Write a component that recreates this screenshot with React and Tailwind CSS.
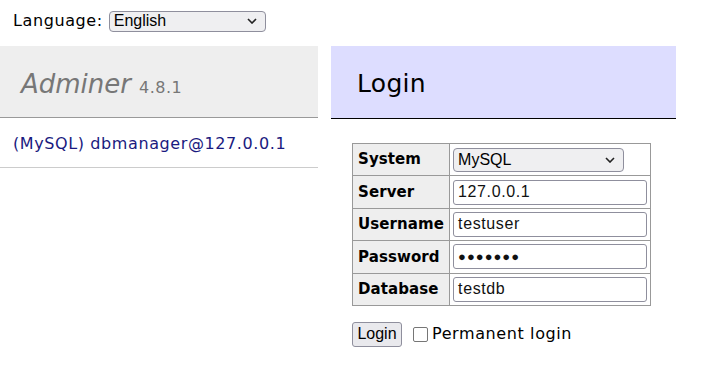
import React from 'react';

const Chevron = () => (
    <svg width="10" height="6" viewBox="0 0 10 6" className="shrink-0">
        <path d="M1 1l4 4 4-4" fill="none" stroke="#222" strokeWidth="1.6" />
    </svg>
);

const Row = ({ label, children }) => (
    <tr>
        <th className="border border-[#999] bg-[#eee] text-left font-bold text-[15px] tracking-[0.1px] px-[5px] h-[32.4px] w-[97px]">{label}</th>
        <td className="border border-[#999] px-[3px]">{children}</td>
    </tr>
);

const Field = ({ value }) => (
    <div className="h-[25px] w-[194px] border border-[#8f8f9d] rounded-[3px] bg-white flex items-center px-[4px] font-['Liberation_Sans',sans-serif] text-[16px] text-[#111]">
        {value}
    </div>
);

export default function App() {
    return (
        <div className="w-[710px] h-[388px] bg-white text-black font-['DejaVu_Sans',sans-serif] text-[16px] tracking-[0.6px] overflow-hidden">
            {/* Language */}
            <div className="flex items-center gap-[6px] pl-[13px] pt-[11px] h-[31px]">
                <span>Language:</span>
                <div className="h-[21px] w-[157px] border border-[#8f8f9d] rounded-[4px] bg-[#efeff1] flex items-center justify-between pl-[4px] pr-[8px] font-['Liberation_Sans',sans-serif] text-[16px] tracking-normal">
                    <span>English</span>
                    <Chevron />
                </div>
            </div>

            <div className="flex mt-[15px]">
                {/* Menu */}
                <div className="w-[318px]">
                    <h1 className="h-[72px] bg-[#eee] border-b border-[#999] flex items-center pl-[21px] pt-[6px] text-[#777] tracking-normal">
                        <span className="italic text-[26px]">Adminer</span>
                        <span className="text-[16px] ml-[8px] mt-[6px] tracking-[0.5px]">4.8.1</span>
                    </h1>
                    <div className="h-[50px] border-b border-[#ccc] flex items-center pl-[13px] pt-[3px] text-[#1a1a80]">
                        (MySQL) dbmanager@127.0.0.1
                    </div>
                </div>

                {/* Content */}
                <div className="ml-[13px] w-[345px]">
                    <h2 className="h-[73px] bg-[#ddf] border-b border-black flex items-center pl-[26px] pt-[3px] text-[25px] tracking-[0.3px]">
                        Login
                    </h2>
                    <div className="pl-[21px] pt-[24px]">
                        <table className="border-collapse">
                            <tbody>
                                <Row label="System">
                                    <div className="h-[24px] w-[171px] border border-[#8f8f9d] rounded-[4px] bg-[#efeff1] flex items-center justify-between pl-[4px] pr-[8px] font-['Liberation_Sans',sans-serif] text-[16px] tracking-normal">
                                        <span>MySQL</span>
                                        <Chevron />
                                    </div>
                                </Row>
                                <Row label="Server"><Field value="127.0.0.1" /></Row>
                                <Row label="Username"><Field value="testuser" /></Row>
                                <Row label="Password">
                                    <Field value={<span className="tracking-[1px] text-[13px]">●●●●●●●</span>} />
                                </Row>
                                <Row label="Database"><Field value="testdb" /></Row>
                            </tbody>
                        </table>
                        <div className="flex items-center mt-[16px]">
                            <div className="h-[25px] w-[50px] border border-[#8f8f9d] rounded-[3px] bg-[#e9e9ed] flex items-center justify-center font-['Liberation_Sans',sans-serif] text-[16px] tracking-normal">
                                Login
                            </div>
                            <div className="ml-[11px] w-[15px] h-[15px] border border-[#767676] rounded-[2px] bg-white"></div>
                            <span className="ml-[4px]">Permanent login</span>
                        </div>
                    </div>
                </div>
            </div>
        </div>
    );
}
